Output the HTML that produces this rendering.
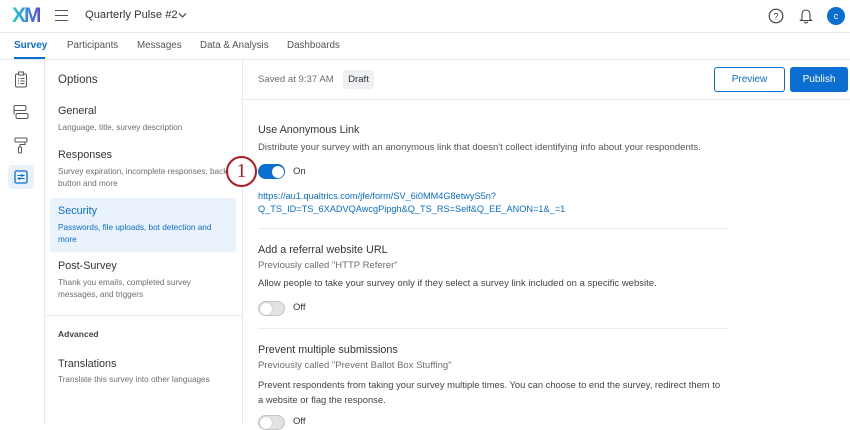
<!DOCTYPE html>
<html><head><meta charset="utf-8"><style>
*{box-sizing:border-box;margin:0;padding:0}
body{width:850px;height:425px;overflow:hidden;background:#fff;font-family:"Liberation Sans",sans-serif;color:#32363a;position:relative}
.a{position:absolute;white-space:nowrap}
.t{font-size:10.8px;color:#32363a}
.s{font-size:8.2px;color:#6a6f75;line-height:12px}
.toggle{position:absolute;width:27px;height:15px;border-radius:8px}
.toggle i{position:absolute;top:1.5px;width:12px;height:12px;border-radius:50%;background:#fff}
</style></head><body>
<div class="a" style="left:12px;top:4px;font-size:21px;font-weight:bold;letter-spacing:-2px;background:linear-gradient(90deg,#21d3c0,#3b7ee8 60%,#5a4be0);-webkit-background-clip:text;color:transparent">XM</div>
<div class="a" style="left:55px;top:10px;width:13px;height:11px;border-top:1.5px solid #555;border-bottom:1.5px solid #555"><div style="margin-top:3.5px;border-top:1.5px solid #555"></div></div>
<div class="a" style="left:85px;top:9px;font-size:11.2px;color:#32363a">Quarterly Pulse #2</div>
<svg class="a" style="left:178px;top:12px" width="9" height="7"><path d="M1 1.5 4.5 5 8 1.5" stroke="#555" stroke-width="1.3" fill="none"/></svg>
<svg class="a" style="left:768px;top:8px" width="16" height="16"><circle cx="8" cy="8" r="6.8" stroke="#444" stroke-width="1.2" fill="none"/><text x="8" y="11.5" font-size="9" text-anchor="middle" font-family="Liberation Sans" fill="#444">?</text></svg>
<svg class="a" style="left:799px;top:7px" width="14" height="17"><path d="M3 12V7a4 4 0 0 1 8 0v5l1.5 1.5h-11z M5.5 14.5a1.5 1.5 0 0 0 3 0" stroke="#444" stroke-width="1.1" fill="none"/></svg>
<div class="a" style="left:827px;top:7px;width:18px;height:18px;border-radius:50%;background:#0b6ed1;color:#fff;font-size:9px;text-align:center;line-height:18px">c</div>
<div class="a" style="left:0;top:32px;width:850px;border-top:1px solid #e8e9ea"></div>
<div class="a" style="left:14px;top:40px;font-size:10px;font-weight:bold;color:#0b6ed1">Survey</div>
<div class="a" style="left:14px;top:57px;width:31px;height:2px;background:#0b6ed1"></div>
<div class="a" style="left:67px;top:40px;font-size:9.8px;color:#555">Participants</div>
<div class="a" style="left:137px;top:40px;font-size:9.8px;color:#555">Messages</div>
<div class="a" style="left:200px;top:40px;font-size:9.8px;color:#555">Data &amp; Analysis</div>
<div class="a" style="left:287px;top:40px;font-size:9.8px;color:#555">Dashboards</div>
<div class="a" style="left:0;top:59px;width:850px;border-top:1px solid #e8e9ea"></div>
<div class="a" style="left:44px;top:60px;height:365px;border-left:1px solid #e8e9ea"></div>
<svg class="a" style="left:14px;top:71px" width="14" height="17"><rect x="1.5" y="3" width="11" height="13" rx="1.5" stroke="#555" fill="none"/><rect x="4.5" y="1" width="5" height="3" fill="#fff" stroke="#555"/><path d="M4 7.5h1M6.5 7.5h4M4 10h1M6.5 10h4M4 12.5h1M6.5 12.5h4" stroke="#555"/></svg>
<svg class="a" style="left:13px;top:104px" width="16" height="16"><rect x="1" y="1.5" width="12" height="5" rx="1.5" stroke="#555" fill="none"/><rect x="3" y="9.5" width="12" height="5" rx="1.5" stroke="#555" fill="none"/><path d="M1 6v4.5" stroke="#555"/></svg>
<svg class="a" style="left:14px;top:137px" width="14" height="17"><rect x="1" y="1" width="12" height="4" rx="1" stroke="#555" fill="none"/><path d="M11 5v2.5H6V10" stroke="#555" fill="none"/><rect x="4.5" y="10" width="3" height="6" rx="1" stroke="#555" fill="none"/></svg>
<div class="a" style="left:8px;top:165px;width:26px;height:24px;border-radius:4px;background:#e9f1fb"></div>
<svg class="a" style="left:14px;top:170px" width="14" height="14"><rect x="1" y="1" width="12" height="12" rx="1.5" stroke="#0b6ed1" stroke-width="1.3" fill="none"/><path d="M3.5 5.5h7M3.5 8.5h7" stroke="#0b6ed1"/><circle cx="8" cy="5.5" r="1.2" fill="#0b6ed1"/><circle cx="5.5" cy="8.5" r="1.2" fill="#0b6ed1"/></svg>
<div class="a" style="left:242px;top:60px;height:365px;border-left:1px solid #e8e9ea"></div>
<div class="a" style="left:58px;top:74px;font-size:11.5px">Options</div>
<div class="a t" style="left:58px;top:105px">General</div>
<div class="a s" style="left:58px;top:122px">Language, title, survey description</div>
<div class="a t" style="left:58px;top:149px">Responses</div>
<div class="a s" style="left:58px;top:166px">Survey expiration, incomplete responses, back<br>button and more</div>
<div class="a" style="left:50px;top:198px;width:186px;height:54px;border-radius:3px;background:#eaf2fc"></div>
<div class="a t" style="left:58px;top:205px;color:#0b6ed1">Security</div>
<div class="a s" style="left:58px;top:222px;color:#0b6ed1">Passwords, file uploads, bot detection and<br>more</div>
<div class="a t" style="left:58px;top:260px">Post-Survey</div>
<div class="a s" style="left:58px;top:277px">Thank you emails, completed survey<br>messages, and triggers</div>
<div class="a" style="left:45px;top:315px;width:197px;border-top:1px solid #e8e9ea"></div>
<div class="a" style="left:58px;top:329px;font-size:8.5px;font-weight:bold;color:#444">Advanced</div>
<div class="a t" style="left:58px;top:358px">Translations</div>
<div class="a s" style="left:58px;top:374px">Translate this survey into other languages</div>
<div class="a" style="left:258px;top:74px;font-size:9.6px;color:#6a6f75">Saved at 9:37 AM</div>
<div class="a" style="left:343px;top:70px;width:31px;height:19px;line-height:19px;border-radius:3px;background:#eef0f2;font-size:9.6px;text-align:center">Draft</div>
<div class="a" style="left:714px;top:67px;width:71px;height:25px;border:1px solid #0b6ed1;border-radius:3px;color:#0b6ed1;font-size:10px;text-align:center;line-height:23px">Preview</div>
<div class="a" style="left:790px;top:67px;width:58px;height:25px;background:#0b6ed1;border-radius:3px;color:#fff;font-size:10px;text-align:center;line-height:25px">Publish</div>
<div class="a" style="left:243px;top:99px;width:607px;border-top:1px solid #e8e9ea"></div>
<div class="a" style="left:258px;top:124px;font-size:10.8px">Use Anonymous Link</div>
<div class="a" style="left:258px;top:142px;font-size:9.5px;color:#555">Distribute your survey with an anonymous link that doesn't collect identifying info about your respondents.</div>
<div class="a" style="left:226px;top:156px;width:31px;height:31px;border-radius:50%;border:2px solid #b01c24;background:#fff;color:#b01c24;font-family:'Liberation Serif',serif;font-size:20px;text-align:center;line-height:27px">1</div>
<div class="toggle" style="left:258px;top:164px;background:#0b6ed1"><i style="left:13.5px"></i></div>
<div class="a" style="left:293px;top:166px;font-size:9.5px">On</div>
<div class="a" style="left:258px;top:190px;font-size:9.2px;color:#0b6ed1;line-height:12.5px">https://au1.qualtrics.com/jfe/form/SV_6i0MM4G8etwyS5n?<br>Q_TS_ID=TS_6XADVQAwcgPipgh&amp;Q_TS_RS=Self&amp;Q_EE_ANON=1&amp;_=1</div>
<div class="a" style="left:258px;top:228px;width:470px;border-top:1px solid #ececec"></div>
<div class="a" style="left:258px;top:244px;font-size:10.8px">Add a referral website URL</div>
<div class="a" style="left:258px;top:260px;font-size:9.5px;color:#6a6f75">Previously called "HTTP Referer"</div>
<div class="a" style="left:258px;top:278px;font-size:9.5px;color:#444">Allow people to take your survey only if they select a survey link included on a specific website.</div>
<div class="toggle" style="left:258px;top:301px;border:1px solid #c4c6c8;background:#e2e3e4"><i style="left:0.5px;top:0.5px;box-shadow:0 0 1px #888"></i></div>
<div class="a" style="left:293px;top:302px;font-size:9.5px">Off</div>
<div class="a" style="left:258px;top:328px;width:470px;border-top:1px solid #ececec"></div>
<div class="a" style="left:258px;top:344px;font-size:10.8px">Prevent multiple submissions</div>
<div class="a" style="left:258px;top:360px;font-size:9.5px;color:#6a6f75">Previously called "Prevent Ballot Box Stuffing"</div>
<div class="a" style="left:258px;top:378px;font-size:9.4px;color:#444;line-height:14.5px">Prevent respondents from taking your survey multiple times. You can choose to end the survey, redirect them to<br>a website or flag the response.</div>
<div class="toggle" style="left:258px;top:415px;border:1px solid #c4c6c8;background:#e2e3e4"><i style="left:0.5px;top:0.5px;box-shadow:0 0 1px #888"></i></div>
<div class="a" style="left:293px;top:416px;font-size:9.5px">Off</div>
</body></html>
